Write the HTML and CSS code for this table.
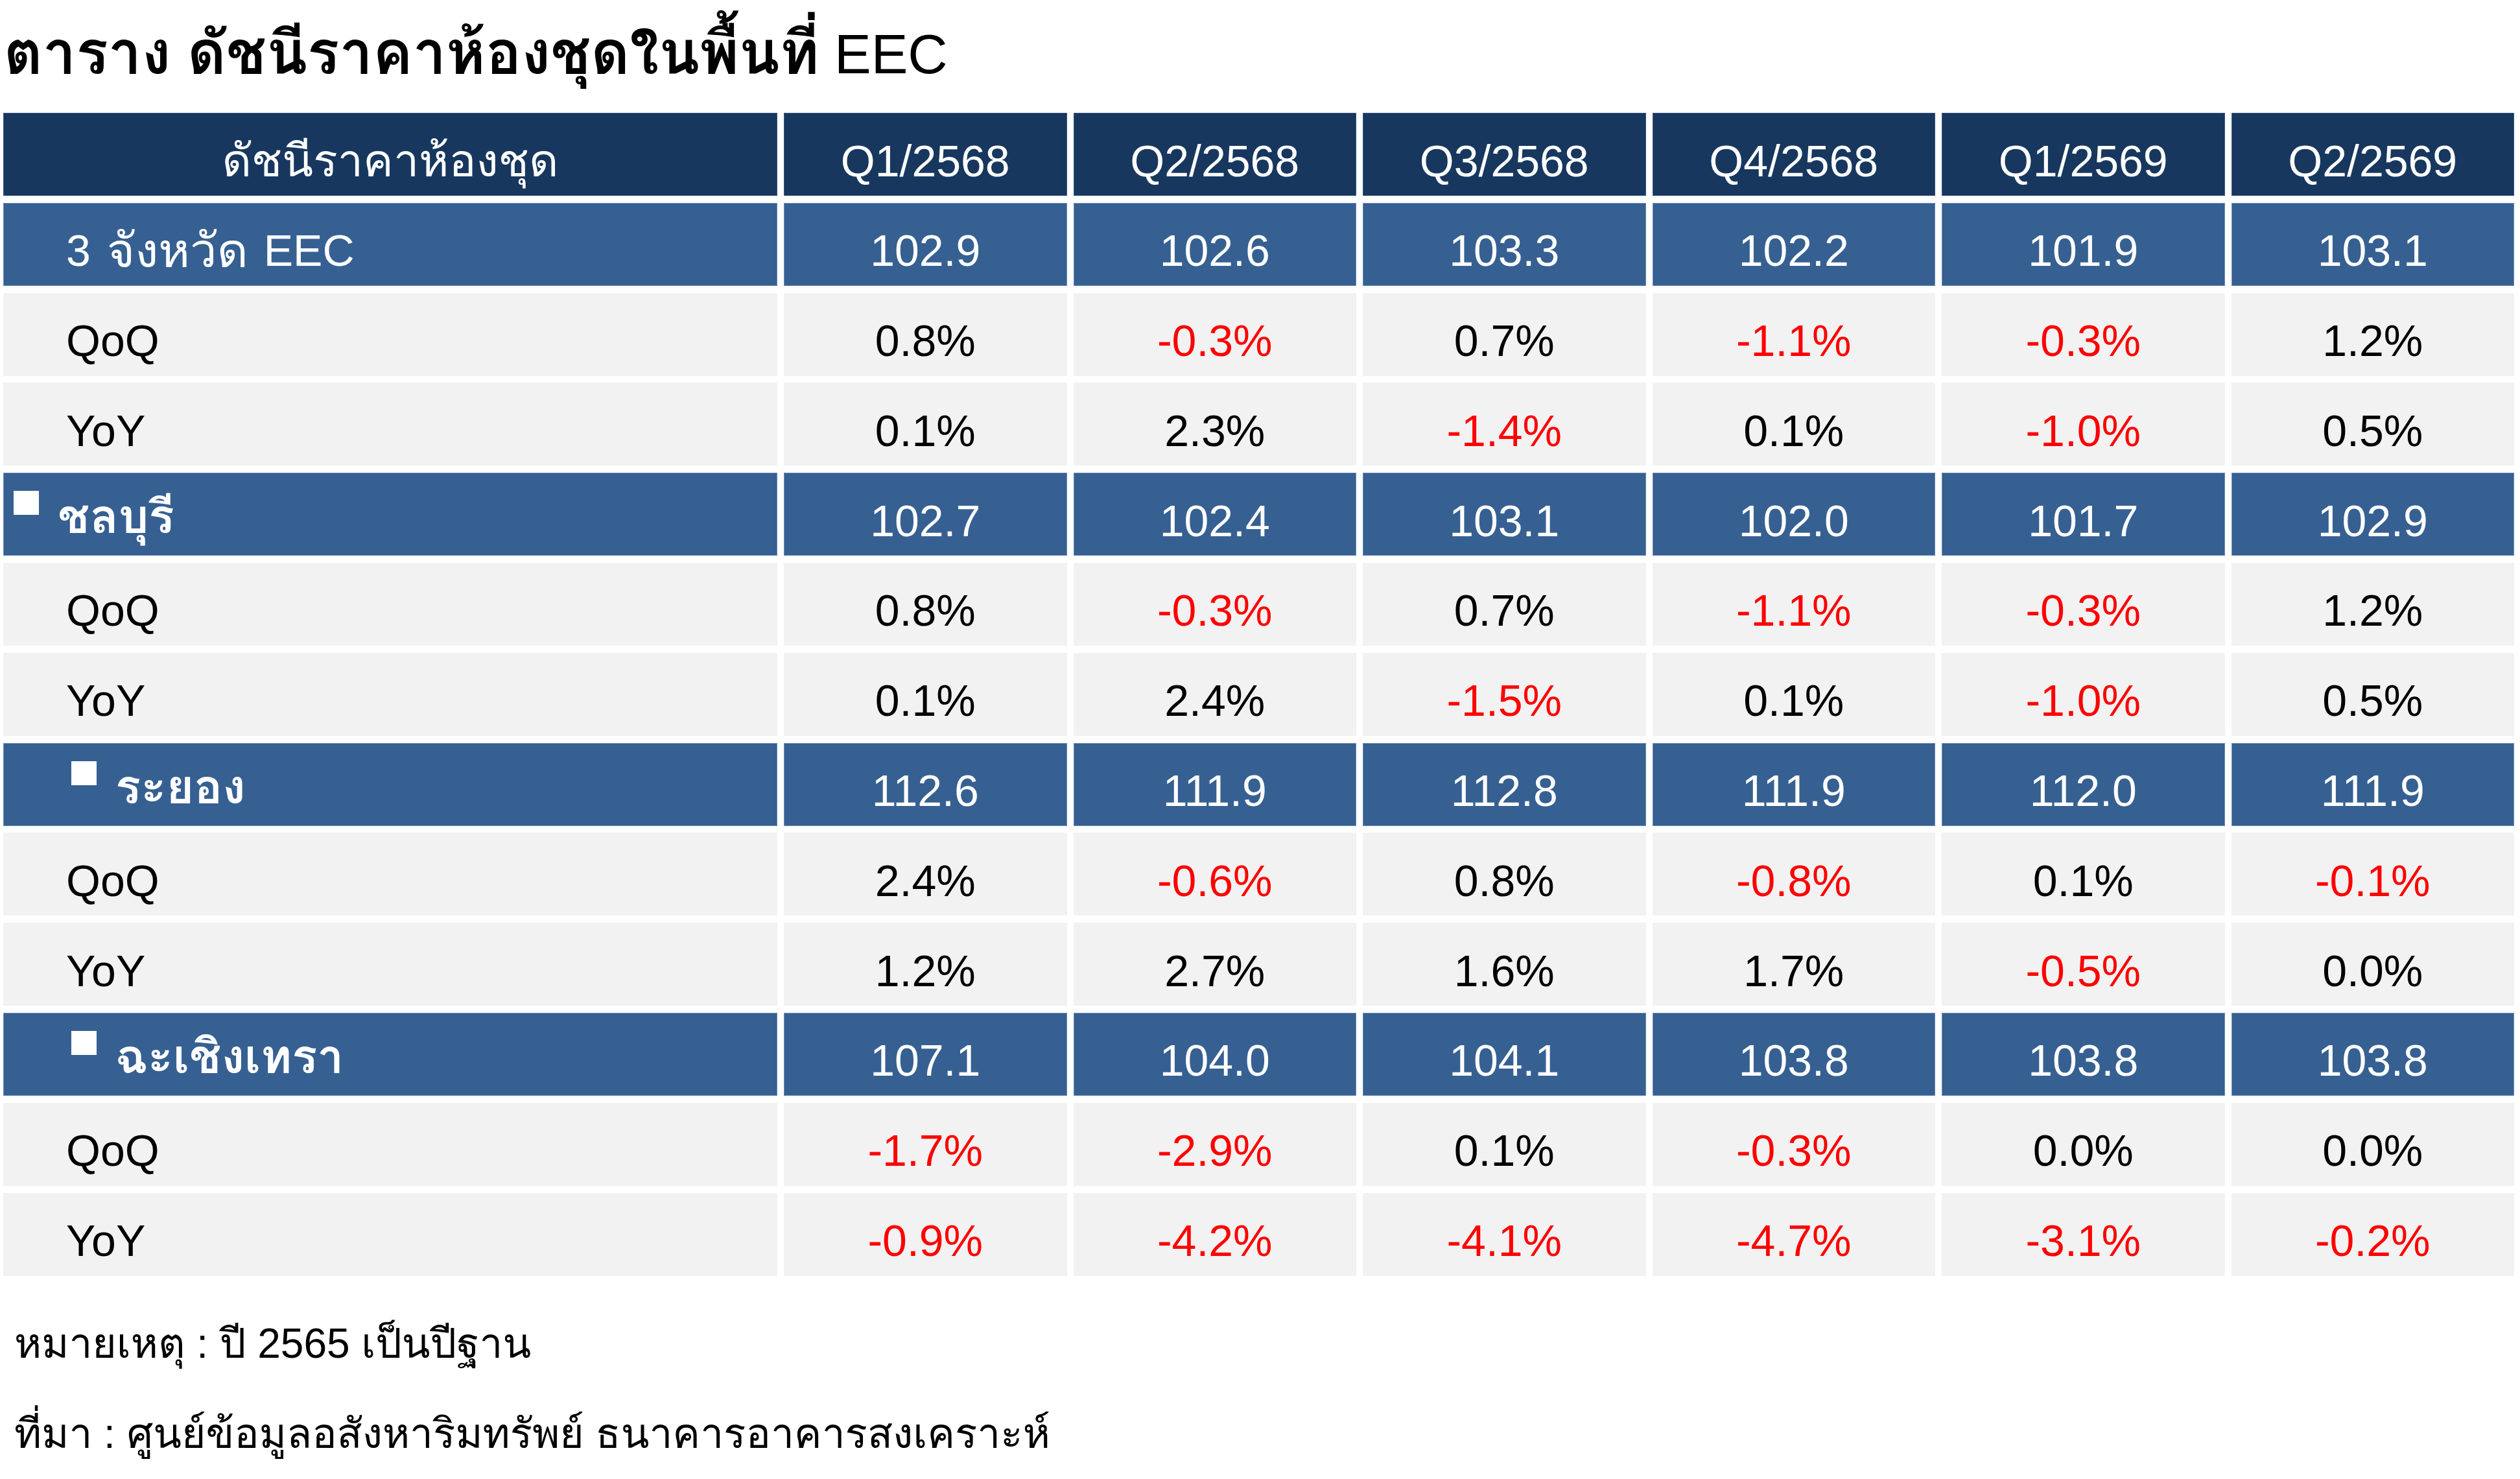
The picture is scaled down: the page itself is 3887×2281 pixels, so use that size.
FILE: index.html
```html
<!DOCTYPE html>
<html lang="th">
<head>
<meta charset="utf-8">
<title>ตาราง ดัชนีราคาห้องชุดในพื้นที่ EEC</title>
<link rel="stylesheet" href="styles.css">
</head>
<body>
<h1 class="title"><span class="title-th">ตาราง ดัชนีราคาห้องชุดในพื้นที่</span> EEC</h1>
<div class="grid">
  <div class="c hd"><span class="th">ดัชนีราคาห้องชุด</span></div>
  <div class="c hd">Q1/2568</div>
  <div class="c hd">Q2/2568</div>
  <div class="c hd">Q3/2568</div>
  <div class="c hd">Q4/2568</div>
  <div class="c hd">Q1/2569</div>
  <div class="c hd">Q2/2569</div>

  <div class="c tot lbl">3<span class="th th-wide">จังหวัด</span>EEC</div>
  <div class="c tot">102.9</div><div class="c tot">102.6</div><div class="c tot">103.3</div><div class="c tot">102.2</div><div class="c tot">101.9</div><div class="c tot">103.1</div>
  <div class="c sub lbl">QoQ</div>
  <div class="c sub">0.8%</div><div class="c sub neg">-0.3%</div><div class="c sub">0.7%</div><div class="c sub neg">-1.1%</div><div class="c sub neg">-0.3%</div><div class="c sub">1.2%</div>
  <div class="c sub lbl">YoY</div>
  <div class="c sub">0.1%</div><div class="c sub">2.3%</div><div class="c sub neg">-1.4%</div><div class="c sub">0.1%</div><div class="c sub neg">-1.0%</div><div class="c sub">0.5%</div>

  <div class="c tot prov prov-a"><span class="bullet"></span><span class="pname">ชลบุรี</span></div>
  <div class="c tot">102.7</div><div class="c tot">102.4</div><div class="c tot">103.1</div><div class="c tot">102.0</div><div class="c tot">101.7</div><div class="c tot">102.9</div>
  <div class="c sub lbl">QoQ</div>
  <div class="c sub">0.8%</div><div class="c sub neg">-0.3%</div><div class="c sub">0.7%</div><div class="c sub neg">-1.1%</div><div class="c sub neg">-0.3%</div><div class="c sub">1.2%</div>
  <div class="c sub lbl">YoY</div>
  <div class="c sub">0.1%</div><div class="c sub">2.4%</div><div class="c sub neg">-1.5%</div><div class="c sub">0.1%</div><div class="c sub neg">-1.0%</div><div class="c sub">0.5%</div>

  <div class="c tot prov prov-b"><span class="bullet"></span><span class="pname">ระยอง</span></div>
  <div class="c tot">112.6</div><div class="c tot">111.9</div><div class="c tot">112.8</div><div class="c tot">111.9</div><div class="c tot">112.0</div><div class="c tot">111.9</div>
  <div class="c sub lbl">QoQ</div>
  <div class="c sub">2.4%</div><div class="c sub neg">-0.6%</div><div class="c sub">0.8%</div><div class="c sub neg">-0.8%</div><div class="c sub">0.1%</div><div class="c sub neg">-0.1%</div>
  <div class="c sub lbl">YoY</div>
  <div class="c sub">1.2%</div><div class="c sub">2.7%</div><div class="c sub">1.6%</div><div class="c sub">1.7%</div><div class="c sub neg">-0.5%</div><div class="c sub">0.0%</div>

  <div class="c tot prov prov-b"><span class="bullet"></span><span class="pname">ฉะเชิงเทรา</span></div>
  <div class="c tot">107.1</div><div class="c tot">104.0</div><div class="c tot">104.1</div><div class="c tot">103.8</div><div class="c tot">103.8</div><div class="c tot">103.8</div>
  <div class="c sub lbl">QoQ</div>
  <div class="c sub neg">-1.7%</div><div class="c sub neg">-2.9%</div><div class="c sub">0.1%</div><div class="c sub neg">-0.3%</div><div class="c sub">0.0%</div><div class="c sub">0.0%</div>
  <div class="c sub lbl">YoY</div>
  <div class="c sub neg">-0.9%</div><div class="c sub neg">-4.2%</div><div class="c sub neg">-4.1%</div><div class="c sub neg">-4.7%</div><div class="c sub neg">-3.1%</div><div class="c sub neg">-0.2%</div>
</div>
<div class="notes">
  <p class="note">หมายเหตุ : ปี 2565 เป็นปีฐาน</p>
  <p class="note">ที่มา : ศูนย์ข้อมูลอสังหาริมทรัพย์ ธนาคารอาคารสงเคราะห์</p>
</div>
</body>
</html>
```
FILE: styles.css
```css
html, body {
  margin: 0;
  padding: 0;
  background: #ffffff;
}
body {
  width: 3887px;
  font-family: "Liberation Sans", "Loma", "Garuda", "Noto Sans Thai Looped", "Noto Sans Thai", "Noto Sans", sans-serif;
  color: #000000;
}
.title {
  margin: 0;
  padding: 21px 0 0 6px;
  font-size: 85px;
  font-weight: 400;
  line-height: 120px;
  white-space: nowrap;
}
.title-th {
  font-size: 92px;
  font-weight: 700;
}
.grid {
  margin: 30px 0 0 5px;
  display: grid;
  grid-template-columns: 1194px repeat(6, 436.5px);
  grid-auto-rows: 128px;
  column-gap: 10px;
  row-gap: 10.8px;
}
.c {
  box-sizing: border-box;
  display: flex;
  align-items: center;
  justify-content: center;
  padding-top: 20px;
  font-size: 68px;
  line-height: 75px;
  white-space: nowrap;
}
.th {
  font-size: 70px;
}
.th-wide {
  margin: 0 24px 0 25px;
  font-size: 74px;
}
.hd {
  background: #17375e;
  color: #ffffff;
  box-shadow: inset 0 0 0 1px #3a5a82;
}
.tot {
  background: #366092;
  color: #ffffff;
  box-shadow: inset 0 0 0 1px #6a8cb6;
}
.sub {
  background: #f2f2f2;
  color: #000000;
}
.neg {
  color: #ff0000;
}
.lbl {
  justify-content: flex-start;
  padding-left: 97px;
}
.prov {
  justify-content: flex-start;
  align-items: flex-start;
  padding-top: 0;
}
.prov-a {
  padding-left: 16px;
}
.prov-b {
  padding-left: 105px;
}
.bullet {
  flex: none;
  width: 39px;
  height: 37px;
  margin-top: 28px;
  background: #ffffff;
}
.pname {
  margin-left: 29px;
  margin-top: 30px;
  font-size: 73px;
  font-weight: 700;
}
.notes {
  margin-top: 35px;
  padding-left: 22px;
}
.note {
  margin: 0;
  font-size: 64px;
  font-weight: 300;
  line-height: 139px;
  white-space: nowrap;
}
```
